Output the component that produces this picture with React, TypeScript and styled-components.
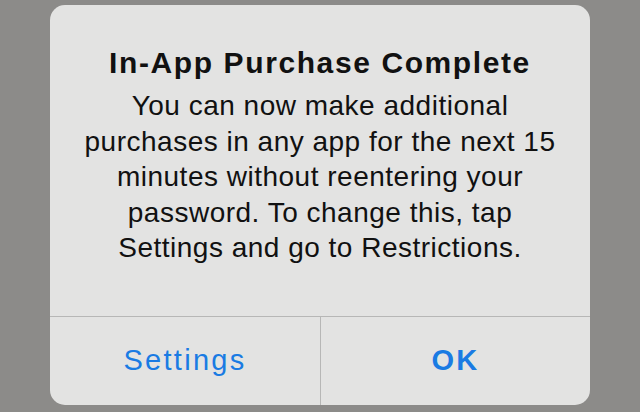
import styled, { createGlobalStyle } from 'styled-components';

const GlobalStyle = createGlobalStyle`
  html, body {
    margin: 0;
    padding: 0;
    background: #8c8b89;
  }
  body {
    font-family: "Liberation Sans", Arial, Helvetica, sans-serif;
    -webkit-font-smoothing: antialiased;
  }
`;

const Screen = styled.div`
  width: 640px;
  height: 412px;
  display: flex;
  justify-content: center;
  padding-top: 5px;
  box-sizing: border-box;
`;

const Alert = styled.div`
  width: 540px;
  height: 400px;
  background: #e3e3e2;
  border-radius: 15px;
  display: flex;
  flex-direction: column;
  overflow: hidden;
`;

const Body = styled.div`
  height: 311px;
  box-sizing: border-box;
  padding: 41px 10px 0;
  text-align: center;
  color: #111;
`;

const Title = styled.h1`
  margin: 0;
  font-size: 30px;
  font-weight: 700;
  line-height: 34px;
  letter-spacing: 1.6px;
`;

const Message = styled.p`
  margin: 8px 0 0;
  font-size: 28px;
  line-height: 35.5px;
  font-weight: 400;
  letter-spacing: 0.5px;
`;

const Actions = styled.div`
  flex: 1;
  display: grid;
  grid-template-columns: 1fr 1fr;
  border-top: 1px solid #b7b7b6;
`;

const Action = styled.button<{ $primary?: boolean }>`
  appearance: none;
  border: none;
  background: transparent;
  font-family: inherit;
  font-size: 29px;
  font-weight: ${(p) => (p.$primary ? 700 : 400)};
  letter-spacing: 2.3px;
  color: #1a7be3;
  padding: 0 0 2px;
  & + & {
    border-left: 1px solid #b7b7b6;
  }
`;

export default function App() {
  return (
    <>
      <GlobalStyle />
      <Screen>
        <Alert>
          <Body>
            <Title>In-App Purchase Complete</Title>
            <Message>
              You can now make additional
              <br />
              purchases in any app for the next 15
              <br />
              minutes without reentering your
              <br />
              password. To change this, tap
              <br />
              Settings and go to Restrictions.
            </Message>
          </Body>
          <Actions>
            <Action>Settings</Action>
            <Action $primary>OK</Action>
          </Actions>
        </Alert>
      </Screen>
    </>
  );
}
